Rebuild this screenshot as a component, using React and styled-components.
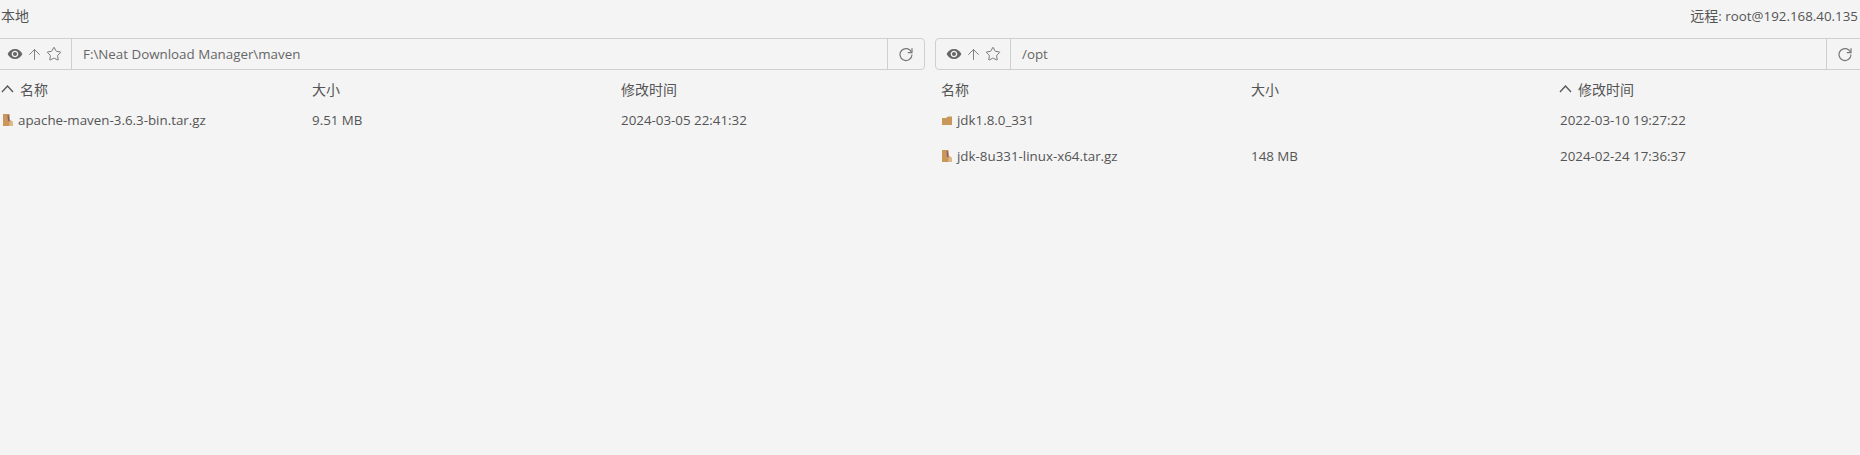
import React from "react";
import styled, { createGlobalStyle } from "styled-components";
import { ArrowUp, Star } from "lucide-react";

const Global = createGlobalStyle`
  html, body { margin: 0; padding: 0; background: #f4f4f4; overflow: hidden; }
  body { font-family: "Open Sans", "Noto Sans CJK SC", sans-serif; font-size: 13.35px; color: #555; }
`;

const Page = styled.div`
  width: 1860px;
  height: 455px;
  overflow: hidden;
  background: #f4f4f4;
`;

const TopBar = styled.div`
  display: flex;
  justify-content: space-between;
  align-items: center;
  height: 30px;
  padding: 0 2px 0 1px;
`;

const Cjk = styled.span`
  font-size: 14px;
`;

const Panes = styled.div`
  display: grid;
  grid-template-columns: 925px 925px;
  column-gap: 10px;
  margin-top: 8px;
`;

const Pane = styled.section`
  min-width: 0;
`;

const AddressBar = styled.div`
  display: flex;
  height: 32px;
  box-sizing: border-box;
  margin-left: ${(p) => (p.$flush ? "-4px" : "0")};
  margin-right: ${(p) => (p.$flush ? "0" : "-4px")};
  border: 1px solid #cfcfcf;
  border-radius: 4px;
`;

const Tools = styled.div`
  display: flex;
  align-items: center;
  gap: 3px;
  width: 75px;
  padding-left: 10px;
  box-sizing: border-box;
  border-right: 1px solid #cfcfcf;
  flex: none;
`;

const Path = styled.div`
  flex: 1;
  display: flex;
  align-items: center;
  padding-left: 11px;
  color: #666;
`;

const Refresh = styled.div`
  flex: none;
  width: 36px;
  display: flex;
  align-items: center;
  justify-content: center;
  border-left: 1px solid #cfcfcf;
`;

const Table = styled.div`
  padding-left: ${(p) => p.$inset}px;
`;

const Row = styled.div`
  display: grid;
  grid-template-columns: 310px 309px 1fr;
  align-items: center;
  height: 36px;
`;

const HeadRow = styled(Row)`
  height: 32px;
  padding-top: 6px;
  box-sizing: border-box;
`;

const Head = styled.div`
  display: flex;
  align-items: center;
  gap: 6px;
  font-size: 14px;
  color: #555;
`;

const Cell = styled.div`
  color: #555;
  white-space: nowrap;
`;

const NameCell = styled(Cell)`
  display: flex;
  align-items: center;
  gap: 5px;
  padding-left: 1px;
`;

const SortMark = styled.svg`
  flex: none;
  margin-left: -1px;
`;

const Eye = () => (
  <svg width="16" height="16" viewBox="0 0 24 24" fill="#666">
    <path d="M12 4.5C7 4.5 2.73 7.61 1 12c1.73 4.39 6 7.5 11 7.5s9.27-3.11 11-7.5c-1.73-4.39-6-7.5-11-7.5zM12 17c-2.76 0-5-2.24-5-5s2.24-5 5-5 5 2.24 5 5-2.24 5-5 5zm0-8c-1.66 0-3 1.34-3 3s1.34 3 3 3 3-1.34 3-3-1.34-3-3-3z" />
  </svg>
);

const Sort = () => (
  <SortMark width="13" height="8" viewBox="0 0 13 8" fill="none" stroke="#555" strokeWidth="1.3">
    <path d="M1 7l5.5-6L12 7" />
  </SortMark>
);

const ReloadIcon = () => (
  <svg width="16" height="16" viewBox="0 0 16 16" fill="none" stroke="#777" strokeWidth="1.2">
    <path d="M13.6 6.4A6 6 0 1 0 14 8.6" />
    <path d="M14 2.2v4.4H9.8" />
  </svg>
);

const ArchiveIcon = () => (
  <svg width="10" height="12" viewBox="0 0 10 12">
    <path d="M0 0h6.5l.5 6 3 2v4H0z" fill="#c9975a" />
    <path d="M4.5 1h1.2l.8 6H5z" fill="#8a5a7a" />
    <path d="M7 7l3 1v4H6z" fill="#e0b98a" />
  </svg>
);

const FolderIcon = () => (
  <svg width="10" height="12" viewBox="0 0 10 12">
    <path d="M0 4h4l2-1.5h4V11H0z" fill="#c9975a" />
  </svg>
);

const Bar = ({ path, flush }) => (
  <AddressBar $flush={flush}>
    <Tools>
      <Eye />
      <ArrowUp size={17} strokeWidth={1.3} color="#777" />
      <Star size={16} strokeWidth={1.3} color="#666" />
    </Tools>
    <Path>{path}</Path>
    <Refresh>
      <ReloadIcon />
    </Refresh>
  </AddressBar>
);

const Header = ({ sortOn }) => (
  <HeadRow>
    <Head>
      {sortOn === "name" && <Sort />}
      名称
    </Head>
    <Head>大小</Head>
    <Head>
      {sortOn === "time" && <Sort />}
      修改时间
    </Head>
  </HeadRow>
);

const FileRow = ({ icon, name, size, time }) => (
  <Row>
    <NameCell>
      {icon === "folder" ? <FolderIcon /> : <ArchiveIcon />}
      {name}
    </NameCell>
    <Cell>{size}</Cell>
    <Cell>{time}</Cell>
  </Row>
);

export default function App() {
  return (
    <Page>
      <Global />
      <TopBar>
        <Cjk>本地</Cjk>
        <span><Cjk>远程</Cjk>: root@192.168.40.135</span>
      </TopBar>
      <Panes>
        <Pane>
          <Bar flush path="F:\Neat Download Manager\maven" />
          <Table $inset={2}>
            <Header sortOn="name" />
            <FileRow name="apache-maven-3.6.3-bin.tar.gz" size="9.51 MB" time="2024-03-05 22:41:32" />
          </Table>
        </Pane>
        <Pane>
          <Bar path="/opt" />
          <Table $inset={6}>
            <Header sortOn="time" />
            <FileRow icon="folder" name="jdk1.8.0_331" size="" time="2022-03-10 19:27:22" />
            <FileRow name="jdk-8u331-linux-x64.tar.gz" size="148 MB" time="2024-02-24 17:36:37" />
          </Table>
        </Pane>
      </Panes>
    </Page>
  );
}
